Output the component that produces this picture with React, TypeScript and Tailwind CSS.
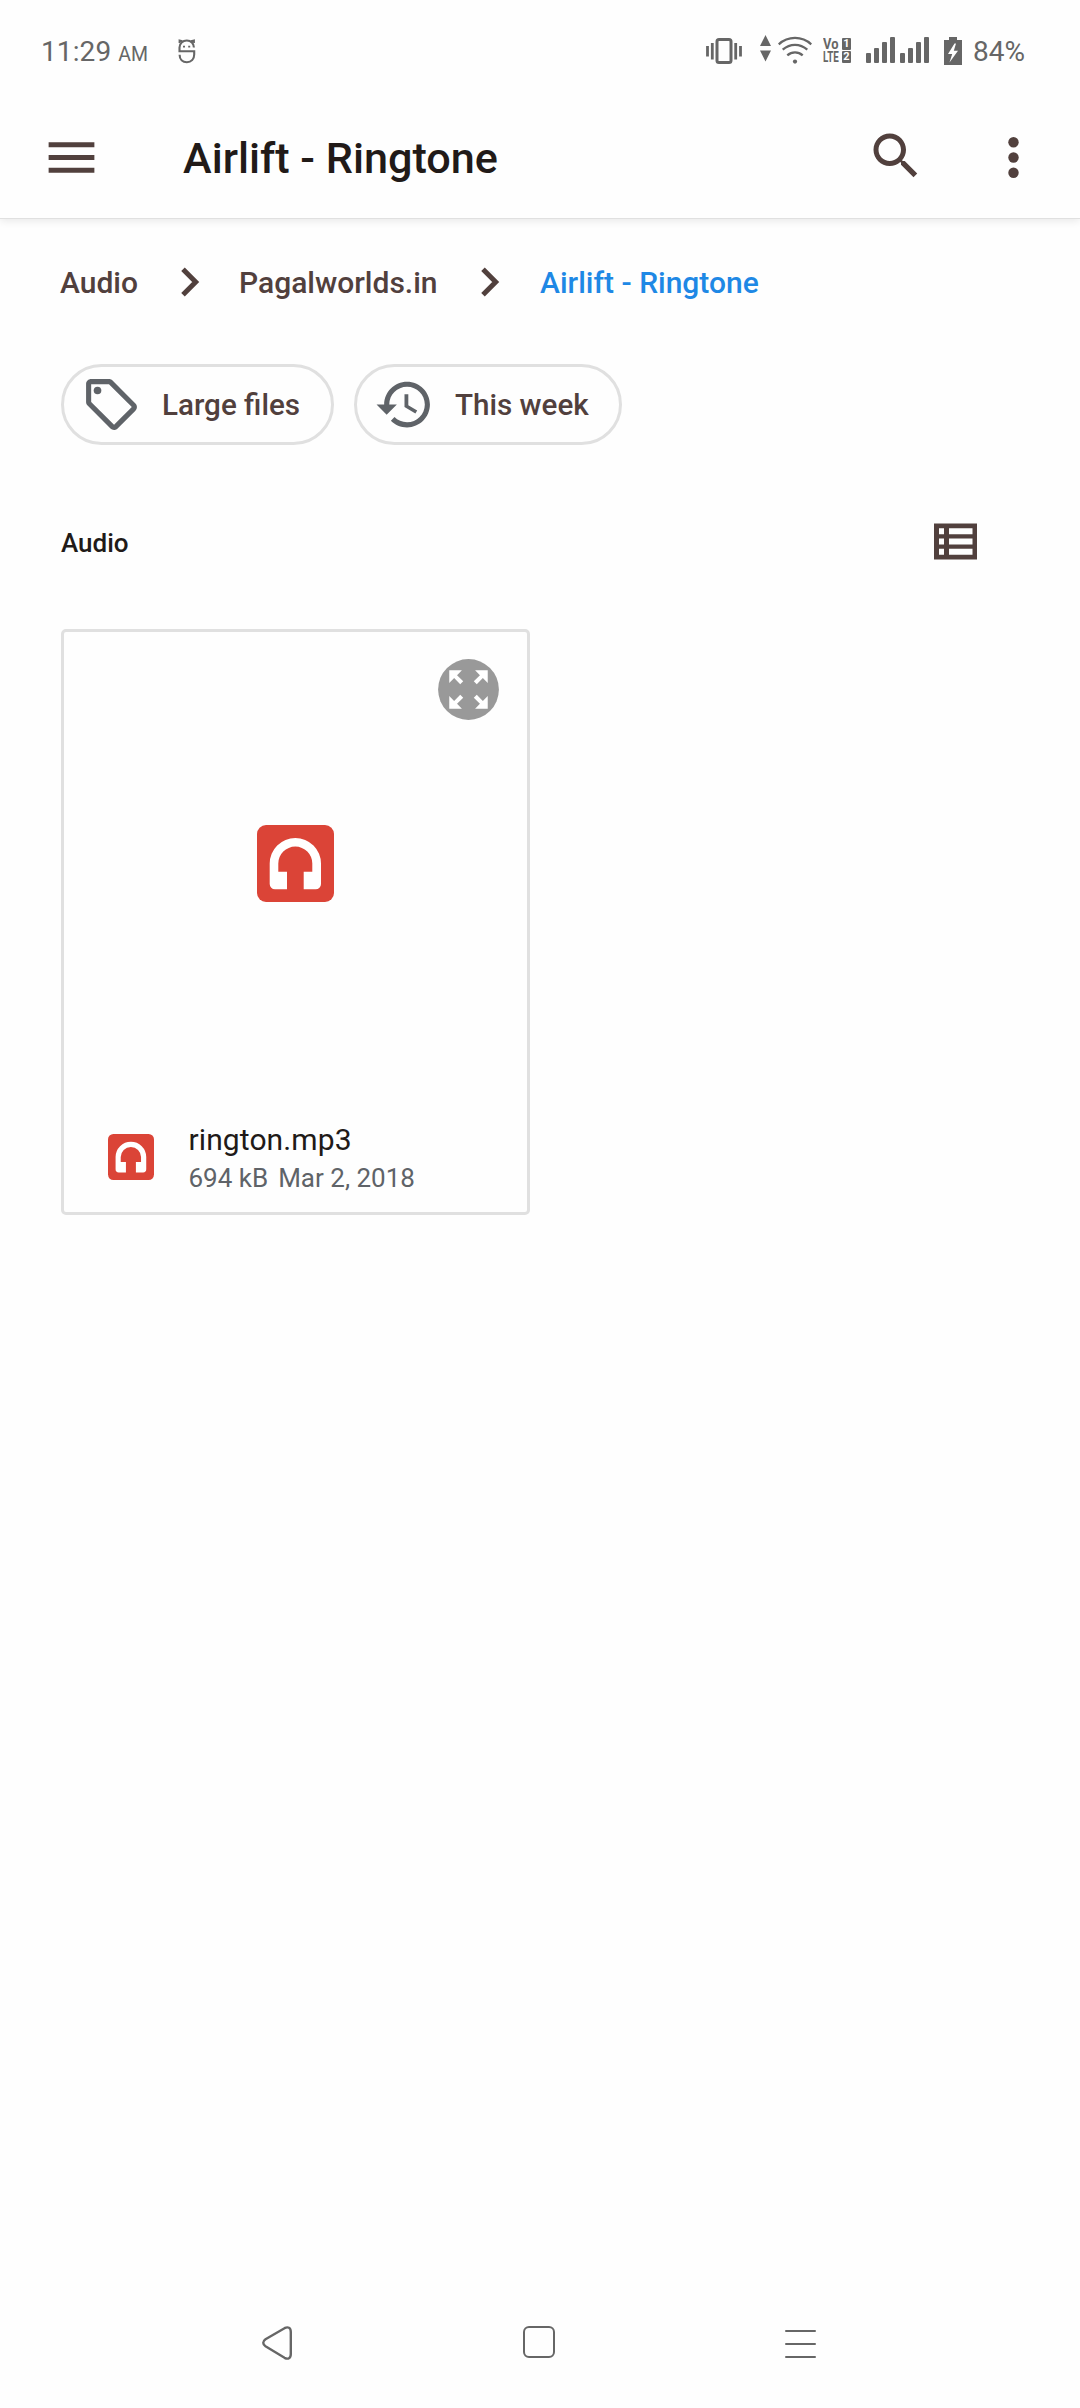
import type { ReactNode } from "react";

function Chevron() {
  return (
    <svg className="h-[30px] w-[19px] shrink-0" viewBox="0 0 19 30" fill="none" stroke="#51403d" strokeWidth="5">
      <path d="M2 2.2 14.7 15 2 27.8" />
    </svg>
  );
}

function AudioBadge({ className }: { className: string }) {
  return (
    <svg className={className} viewBox="0 0 77 77">
      <rect width="77" height="77" rx="9" fill="#db4437" />
      <path
        fill="#fff"
        d="M12.7 38.6a25.65 25.65 0 0 1 51.3 0V59a5.3 5.3 0 0 1-5.3 5.3H46.7V46.7h8.6v-8.1a17 17 0 0 0-34 0v8.1H30v17.6H18a5.3 5.3 0 0 1-5.3-5.3z"
      />
    </svg>
  );
}

function SignalBars() {
  return (
    <div className="flex h-[26px] items-end gap-[3px]">
      <div className="h-[10px] w-[5px] rounded-[1px] bg-[#666]" />
      <div className="h-[15px] w-[5px] rounded-[1px] bg-[#666]" />
      <div className="h-[21px] w-[5px] rounded-[1px] bg-[#666]" />
      <div className="h-[26px] w-[5px] rounded-[1px] bg-[#666]" />
    </div>
  );
}

function StatusBar() {
  return (
    <div className="relative z-10 flex h-[84px] shrink-0 items-start bg-[#fefefe] pt-[35px] pl-[41px] text-[#666]">
      <div className="flex h-[32px] w-[137px] items-baseline whitespace-nowrap">
        <span className="text-[28px] leading-[33px] tracking-[0.1px]">11:29</span>
        <span className="ml-[7px] text-[19.5px]">AM</span>
      </div>
      <svg className="mt-[4px] h-[25px] w-[18px]" viewBox="0 0 18 25" fill="none" stroke="#666" strokeWidth="2.1">
        <path d="M15.900 8.600C15.900 4.200 13 1.500 8.800 1.500S1.500 4.500 1.500 8.500v3.700H16.200v3.300c0 4.700-3 7.700-7.300 7.700s-7.300-3-7.300-7.400" />
        <path d="M1.500 4V1.300l3 .800M16 4V1.300l-3 .8" strokeWidth="1.800" />
        <path d="M5 7.600h2M10.200 7.600h2" strokeWidth="1.800" />
      </svg>
      <svg className="mt-[2px] ml-[510px] h-[28px] w-[36px]" viewBox="0 0 36 28" fill="none" stroke="#666">
        <rect x="11" y="2.400" width="14" height="23.200" rx="2" strokeWidth="3" />
        <path d="M1.500 9v10.500M34.500 9v10.500M6.300 6v16.500M29.700 6v16.500" strokeWidth="2.800" />
      </svg>
      <svg className="ml-[18px] h-[27px] w-[11px]" viewBox="0 0 11 27" fill="#666">
        <path d="M5.500 0 11 11H0zM0 15.500h11l-5.500 11z" />
      </svg>
      <svg className="mt-[1px] ml-[7px] h-[28px] w-[34px]" viewBox="0 0 34 28" fill="none" stroke="#666" strokeWidth="2.300">
        <path d="M.700 8.300C10-.3 24-.3 33.300 8.300M4.700 13.700C12 7.200 22 7.200 29.300 13.700M9.300 19.300c4.500-4 10.900-4 15.400 0" />
        <circle cx="17" cy="25.600" r="2.100" fill="#666" stroke="none" />
      </svg>
      <div className="mt-[3px] ml-[11px] grid h-[26px] w-[28px] grid-cols-[19px_9px] grid-rows-[13px_13px] text-[14px] leading-[13px] font-bold">
        <span className="w-[19px] origin-left scale-x-[.92]">Vo</span>
        <span className="h-[12px] w-[9px] rounded-[1px] bg-[#666] text-center text-[11px] leading-[12px] text-[#fefefe]">1</span>
        <span className="w-[26px] origin-left scale-x-[.7]">LTE</span>
        <span className="h-[12px] w-[9px] rounded-[1px] bg-[#666] text-center text-[11px] leading-[12px] text-[#fefefe]">2</span>
      </div>
      <div className="mt-[2px] ml-[15px] flex gap-[5px]">
        <SignalBars />
        <SignalBars />
      </div>
      <svg className="mt-[2px] ml-[15px] h-[28px] w-[18px]" viewBox="0 0 18 28">
        <path fill="#666" d="M5 0h8v3h5v25H0V3h5z" />
        <path fill="#fff" d="M10.500 6.500 4 17h4.200L5.500 25.500 14 13.800H9.800L12 6.500z" />
      </svg>
      <span className="ml-[11px] text-[28px] leading-[33px] whitespace-nowrap">84%</span>
    </div>
  );
}

function AppBar() {
  return (
    <header className="flex h-[135px] shrink-0 items-start border-b border-[#e0e0e0] pl-[41px] shadow-[0_2px_8px_rgba(0,0,0,0.09)]">
      <svg className="mt-[43px] size-[61px]" viewBox="0 0 24 24" fill="#51403d">
        <path d="M3 18h18v-2H3v2zm0-5h18v-2H3v2zm0-7v2h18V6H3z" />
      </svg>
      <h1 className="mt-[50px] ml-[81px] w-[683px] text-[43.200px] leading-[50px] font-medium whitespace-nowrap text-[#211a18]">
        Airlift - Ringtone
      </h1>
      <svg className="mt-[42px] size-[60px]" viewBox="0 0 24 24" fill="#51403d">
        <path d="M15.500 14h-.790l-.280-.270C15.410 12.590 16 11.110 16 9.500 16 5.910 13.090 3 9.500 3S3 5.910 3 9.500 5.910 16 9.500 16c1.610 0 3.090-.590 4.230-1.570l.270.280v.790l5 4.990L20.490 19l-4.990-5zm-6 0C7.010 14 5 11.990 5 9.500S7.010 5 9.500 5 14 7.010 14 9.500 11.990 14 9.500 14z" />
      </svg>
      <svg className="mt-[43px] ml-[57px] size-[61px]" viewBox="0 0 24 24" fill="#51403d">
        <circle cx="12" cy="6" r="2.050" />
        <circle cx="12" cy="12" r="2.050" />
        <circle cx="12" cy="18" r="2.050" />
      </svg>
    </header>
  );
}

function Chip({ width, label, icon }: { width: string; label: string; icon: ReactNode }) {
  return (
    <button
      className={`flex h-[81px] items-center rounded-full border-[3px] border-[#e0e0e0] text-[29.600px] font-medium whitespace-nowrap text-[#51403d] ${width}`}
    >
      {icon}
      <span className="mt-[1px] ml-[20px]">{label}</span>
    </button>
  );
}

function FileCard() {
  return (
    <article className="mt-[68px] ml-[61px] flex h-[586px] w-[469px] flex-col rounded-[5px] border-[3px] border-[#e0e0e0]">
      <div className="flex h-[192px] justify-end pt-[27px] pr-[28px]">
        <svg className="size-[61px]" viewBox="0 0 61.200 61.200">
          <circle cx="30.600" cy="30.600" r="30.500" fill="#999" />
          <g fill="#fff">
            <path d="M11.300 11.300H24l-4.900 4.900 6.200 6.100-3 3-6.100-6.200-4.900 4.900z" />
            <path d="M11.300 11.300H24l-4.900 4.900 6.200 6.100-3 3-6.100-6.200-4.900 4.900z" transform="rotate(90 30.600 30.600)" />
            <path d="M11.300 11.300H24l-4.900 4.900 6.200 6.100-3 3-6.100-6.200-4.900 4.900z" transform="rotate(180 30.600 30.600)" />
            <path d="M11.300 11.300H24l-4.900 4.900 6.200 6.100-3 3-6.100-6.200-4.900 4.900z" transform="rotate(270 30.600 30.600)" />
          </g>
        </svg>
      </div>
      <AudioBadge className="mt-[.5px] ml-[192.500px] size-[77px]" />
      <div className="mt-[220.500px] flex">
        <AudioBadge className="mt-[11.500px] ml-[43.500px] size-[46px]" />
        <div className="ml-[35px] whitespace-nowrap">
          <div className="text-[30px] leading-[36px] tracking-[0.100px] text-[#211a18]">rington.mp3</div>
          <div className="mt-[4px] flex text-[26px] leading-[32px] text-[#5f6368]">
            <span>694 kB</span>
            <span className="ml-[10px]">Mar 2, 2018</span>
          </div>
        </div>
      </div>
    </article>
  );
}

function NavBar() {
  return (
    <nav className="mt-auto flex h-[130px] shrink-0 items-start justify-between pr-[264px] pl-[262px]">
      <svg className="mt-[48px] h-[34px] w-[31px]" viewBox="0 0 31 34" fill="none" stroke="#666" strokeWidth="2.400">
        <path d="M3.500 13.200 22.500 2.200C26 .500 28.800 1.500 28.800 6v22c0 4.500-2.800 5.500-6.300 3.800L3.500 20.300c-3-2-3-5 0-7.100z" />
      </svg>
      <div className="mt-[48px] size-[32px] rounded-[6px] border-2 border-[#666]" />
      <div className="mt-[51.500px] flex w-[31px] flex-col gap-[10.500px]">
        <div className="h-[2.500px] rounded-full bg-[#666]" />
        <div className="h-[2.500px] rounded-full bg-[#666]" />
        <div className="h-[2.500px] rounded-full bg-[#666]" />
      </div>
    </nav>
  );
}

export default function App() {
  return (
    <div className="flex h-[2408px] w-[1080px] flex-col overflow-hidden bg-[#fefefe] font-['Roboto',sans-serif]">
      <StatusBar />
      <AppBar />
      <nav className="mt-[45px] ml-[60px] flex h-[36px] items-center text-[30px] font-medium whitespace-nowrap text-[#51403d]">
        <span className="mt-[1px] w-[121px]">Audio</span>
        <Chevron />
        <span className="mt-[1px] ml-[39px] w-[242px]">Pagalworlds.in</span>
        <Chevron />
        <span className="mt-[1px] ml-[40px] text-[#1e88e5]">Airlift - Ringtone</span>
      </nav>
      <div className="mt-[64px] ml-[61px] flex gap-[20px]">
        <Chip
          width="w-[273px] pl-[17px]"
          label="Large files"
          icon={
            <svg className="size-[61px]" viewBox="0 0 24 24" fill="#5f6368">
              <path d="M21.410 11.580l-9-9C12.050 2.220 11.550 2 11 2H4c-1.100 0-2 .9-2 2v7c0 .550.220 1.050.590 1.420l9 9c.360.360.860.580 1.410.580s1.050-.220 1.410-.590l7-7c.370-.360.590-.860.590-1.410s-.230-1.060-.590-1.420zM13 20.010L4 11V4h7v-.010l9 9-7 7.020z" />
              <circle cx="6.500" cy="6.500" r="1.500" />
            </svg>
          }
        />
        <Chip
          width="w-[268px] pl-[17px]"
          label="This week"
          icon={
            <svg className="size-[61px]" viewBox="0 0 24 24" fill="#5f6368">
              <path d="M13 3c-4.970 0-9 4.030-9 9H1l3.890 3.890.070.140L9 12H6c0-3.870 3.130-7 7-7s7 3.130 7 7-3.130 7-7 7c-1.930 0-3.680-.790-4.940-2.060l-1.420 1.420C8.270 19.990 10.510 21 13 21c4.970 0 9-4.030 9-9s-4.030-9-9-9zm-1 5v5l4.280 2.540.720-1.210-3.500-2.080V8H12z" />
            </svg>
          }
        />
      </div>
      <div className="mt-[78px] ml-[61px] flex h-[38px] items-center">
        <h2 className="mt-[1px] w-[873px] text-[26px] leading-[30px] font-medium text-[#211a18]">Audio</h2>
        <svg className="-mt-[1px] h-[37px] w-[43px]" viewBox="0 0 43 37">
          <rect width="43" height="36" y=".5" fill="#51403d" />
          <path fill="#fefefe" d="M5 5.300h5v5.900H5zM15 5.300h23.500v5.900H15zM5 15.600h5v5.900H5zM15 15.600h23.500v5.900H15zM5 25.800h5v5.900H5zM15 25.800h23.500v5.900H15z" />
        </svg>
      </div>
      <FileCard />
      <NavBar />
    </div>
  );
}
